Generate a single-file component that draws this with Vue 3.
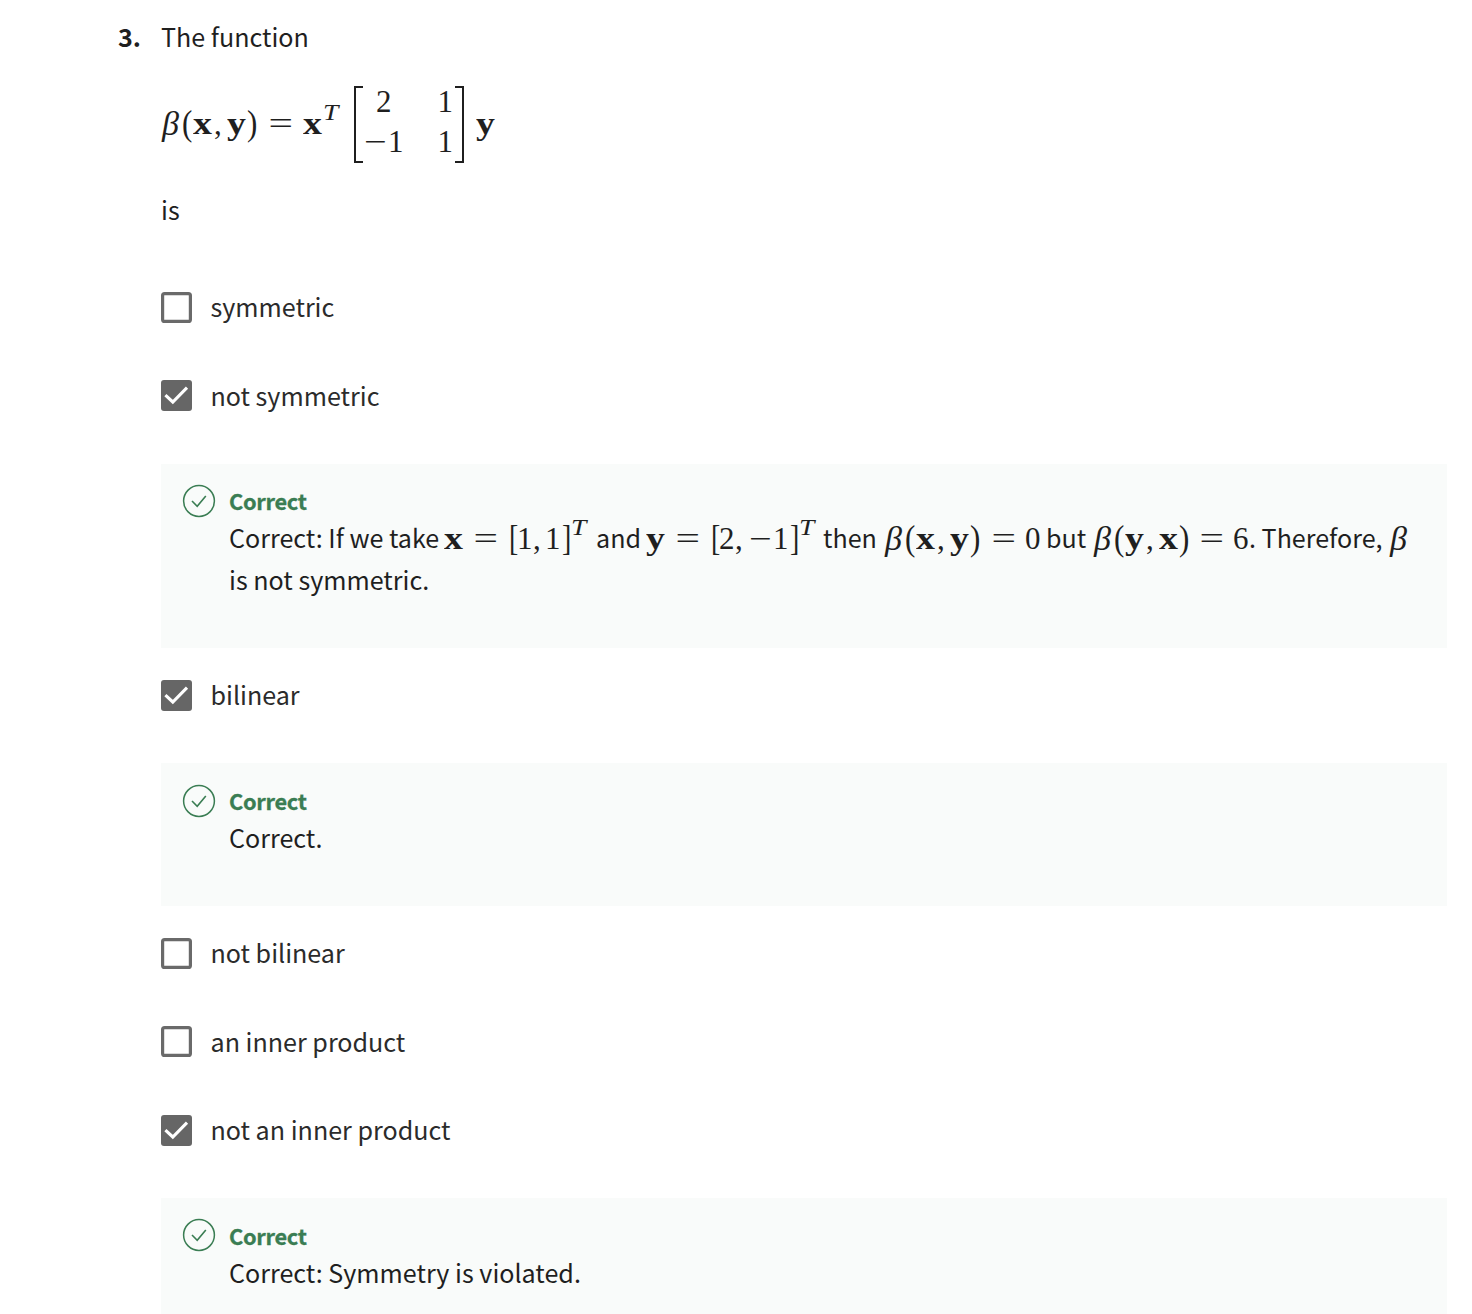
<script setup>
// Math tokens: [text, kind, advance width in px]
const beta = (a, b) => [
  ['β', 'beta', 21], ['(', 'paren', 11], [a, 'vec', 21], [',', 'num', 13], [b, 'vec', 20], [')', 'paren', 12]
]
const formula = [...beta('x', 'y'), ['=', 'rel', 44], ['x', 'vec', 19], ['T', 'sup', 19]]
const explanation = [
  ['Correct: If we take', 'word', 215],
  ['x', 'vec', 20], ['=', 'rel', 44], ['[', 'sq', 9], ['1', 'one', 16], [',', 'num', 12], ['1', 'one', 16], [']', 'sq', 9], ['T', 'sup', 26],
  ['and', 'word', 50],
  ['y', 'vec', 20], ['=', 'rel', 44], ['[', 'sq', 9], ['2', 'num', 16], [',', 'num', 14], ['−', 'minus', 24], ['1', 'one', 16], [']', 'sq', 9], ['T', 'sup', 25],
  ['then', 'word', 61],
  ...beta('x', 'y'), ['=', 'rel', 43], ['0', 'num', 21], ['but', 'word', 47],
  ...beta('y', 'x'), ['=', 'rel', 42], ['6', 'num', 16],
  ['. Therefore,', 'word', 140], ['β', 'beta', 20]
]
const options = [
  { label: 'symmetric', on: false },
  { label: 'not symmetric', on: true, math: explanation, note: 'is not symmetric.', size: 'tall' },
  { label: 'bilinear', on: true, note: 'Correct.' },
  { label: 'not bilinear', on: false },
  { label: 'an inner product', on: false },
  { label: 'not an inner product', on: true, note: 'Correct: Symmetry is violated.' }
]
</script>

<template>
  <main class="page">
    <div class="number">3.</div>
    <section class="question">
      <p class="intro">The function</p>
      <div class="formula">
        <span v-for="(t, i) in formula" :key="i" class="tok" :class="t[1]" :style="{ width: t[2] + 'px' }"><span>{{ t[0] }}</span></span>
        <span class="matrix">
          <span class="row"><span class="cell first">2</span><span class="cell last">1</span></span>
          <span class="row"><span class="cell neg"><span class="tok minus"><span>−</span></span>1</span><span class="cell last">1</span></span>
        </span>
        <span class="tok vec"><span>y</span></span>
      </div>
      <p class="is">is</p>

      <template v-for="o in options" :key="o.label">
        <label class="option">
          <svg class="box" viewBox="0 0 31 31">
            <rect v-if="o.on" x="0" y="0" width="31" height="31" rx="3" fill="#666" />
            <rect v-else x="1.6" y="1.6" width="27.8" height="27.8" rx="2" fill="#fff" stroke="#6a6a6a" stroke-width="3.2" />
            <path v-if="o.on" d="M4.4 15.2 L11.8 22 L26 7.6" fill="none" stroke="#fff" stroke-width="3.1" />
          </svg>
          <span class="label">{{ o.label }}</span>
        </label>
        <div v-if="o.note" class="feedback" :class="o.size">
          <svg class="badge" viewBox="0 0 34 34" fill="none" stroke="#3a7d53">
            <circle cx="17" cy="17" r="15.4" stroke-width="1.5" />
            <path d="M10 17 L15.2 22.2 L23.8 12" stroke-width="1.6" />
          </svg>
          <div class="body">
            <strong>Correct</strong>
            <p v-if="o.math"><span v-for="(t, i) in o.math" :key="i" class="tok" :class="t[1]" :style="{ width: t[2] + 'px' }"><span>{{ t[0] }}</span></span></p>
            <p>{{ o.note }}</p>
          </div>
        </div>
      </template>
    </section>
  </main>
</template>

<style>
body { margin: 0; background: #fff; overflow: hidden; }
</style>

<style scoped>
.page {
  display: flex;
  box-sizing: border-box;
  width: 1472px;
  height: 1314px;
  padding-left: 118px;
  overflow: hidden;
  background: #fff;
  color: #1f1f1f;
  font-family: "Noto Sans CJK SC", "Noto Sans", sans-serif;
  font-size: 25.1px;
}
p { margin: 0; white-space: nowrap; }
.number { width: 43px; line-height: 42px; padding-top: 15px; font-weight: 700; flex: none; }
.question { width: 1286px; flex: none; }
.intro { height: 42px; line-height: 42px; padding-top: 15px; }
.formula { display: flex; align-items: center; height: 77px; margin-top: 29px; white-space: nowrap; }
.formula > .tok { padding-bottom: 2px; }
.is { height: 42px; line-height: 42px; margin-top: 25px; margin-bottom: 33px; }

.tok { display: inline-block; line-height: 1; white-space: pre; }
p .tok { line-height: 0; }
.tok > span { display: inline-block; transform-origin: 0 50%; }
.tok:not(.word) { font-family: "Liberation Serif", serif; font-size: 31px; }
.body p .tok:not(.word) { vertical-align: -1px; }
.vec > span { font-weight: 700; transform: scaleX(1.22); }
.beta > span { font-style: italic; transform: translateX(1px) scale(1.1, 1.06); }
.paren > span { transform: scale(1, 1.13); }
.sq > span { transform: translateX(1px) scale(0.9, 1.13); }
.rel { text-align: center; }
.rel > span { transform: scaleX(1.4); transform-origin: 50% 50%; }
.minus > span { transform: scaleX(1.3); }
.body p .tok.sup { vertical-align: 13px; }
.tok.sup:not(.word) { font-size: 23px; }
.sup > span { font-style: italic; transform: translateX(1px) scaleX(1.2); }
.formula > .sup { padding-bottom: 25px; }

.matrix {
  position: relative;
  display: flex;
  flex-direction: column;
  box-sizing: border-box;
  width: 110px;
  height: 77px;
  margin: 0 12px 0 13px;
  padding: 0 11px 0 10px;
  font-family: "Liberation Serif", serif;
  font-size: 31px;
}
.matrix::before, .matrix::after {
  content: "";
  position: absolute;
  top: 0;
  bottom: 0;
  width: 7px;
  border: 2px solid #1f1f1f;
}
.matrix::before { left: 0; border-right: 0; }
.matrix::after { right: 0; border-left: 0; }
.row { display: flex; justify-content: space-between; height: 40px; line-height: 32px; }
.row + .row { line-height: 33px; }
.first { padding-left: 12px; }
.neg .tok { width: 24px; }

.option { display: flex; align-items: center; height: 88.5px; color: #2b2b2b; }
.label { padding-bottom: 2px; }
.box { width: 31px; height: 31px; margin-right: 18.5px; flex: none; }
.feedback {
  display: flex;
  box-sizing: border-box;
  height: 142.3px;
  margin: 23.8px 0 3.2px;
  padding: 20.35px 0 0 21px;
  background: #f9fbfa;
}
.feedback.tall { height: 184px; padding-top: 20.2px; }
.badge { width: 34px; height: 34px; margin-right: 13px; flex: none; }
.body { padding-top: 0.8px; }
.tall .body { padding-top: 0; }
.body strong { display: block; height: 33px; line-height: 34px; font-size: 21.8px; letter-spacing: -0.3px; -webkit-text-stroke: 0.3px #3a7d53; color: #3a7d53; }
.body p { height: 42px; line-height: 41px; }
</style>
